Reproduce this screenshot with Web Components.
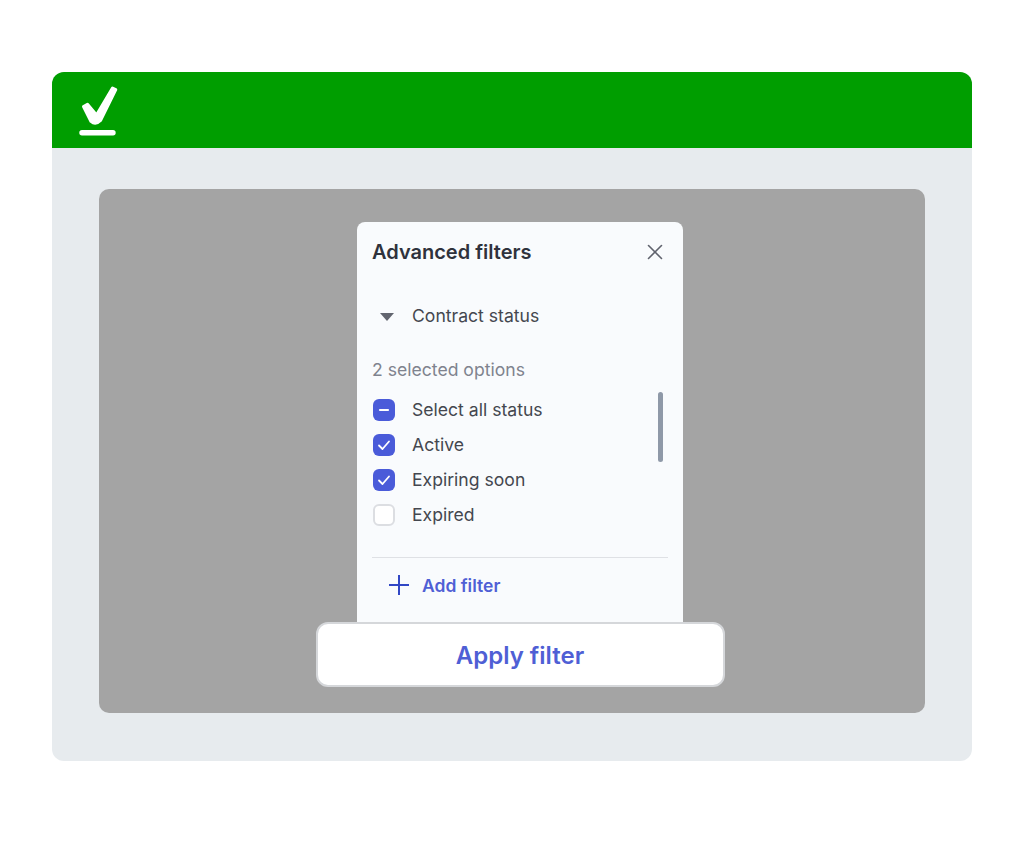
<!DOCTYPE html>
<html>
<head>
<meta charset="utf-8">
<title>Advanced filters</title>
<style>
html, body { margin: 0; background: #fff; }
body { font-family: "Inter", "Liberation Sans", sans-serif; }
</style>
</head>
<body>
<app-window>
	<filter-panel>
		<filter-check state="mixed">Select all status</filter-check>
		<filter-check state="on">Active</filter-check>
		<filter-check state="on">Expiring soon</filter-check>
		<filter-check>Expired</filter-check>
	</filter-panel>
	<apply-button>Apply filter</apply-button>
</app-window>

<script>
// WebComponents for the filter screen

const app_window_template = document.createElement('template');
app_window_template.innerHTML = `
<style>
:host { display: block; padding: 72px 52px 93px; }
#frame { background: #e7ebee; border-radius: 12px; overflow: hidden; height: 689px; }
header { background: #009e00; height: 76px; padding: 12px 0 0 27px; box-sizing: border-box; }
svg { display: block; }
#content { padding: 41px 47px 0; }
#overlay { background: #a4a4a4; border-radius: 10px; height: 524px; padding: 33px 0 0 16px; box-sizing: border-box;
	display: flex; flex-direction: column; align-items: center; }
</style>
<div id="frame">
	<header>
		<svg width="40" height="53" viewBox="0 0 40 53" fill="#fff" stroke="#fff" stroke-linecap="round" stroke-linejoin="round">
			<path d="M4.5 22.5 L8.5 20.3 L17.5 31 L33.5 4 L36.8 5.5 L21.5 36.5 Q16.5 41.5 12 37.5 Z" stroke-width="3"/>
			<path d="M3 48.7 H34" fill="none" stroke-width="5.4"/>
		</svg>
	</header>
	<div id="content">
		<div id="overlay"><slot></slot></div>
	</div>
</div>
`;

class AppWindow extends HTMLElement {
	constructor() {
		super();
		this.attachShadow({mode: 'open'}).appendChild(app_window_template.content.cloneNode(true));
	}
}

const filter_panel_template = document.createElement('template');
filter_panel_template.innerHTML = `
<style>
:host { display: block; width: 326px; height: 401px; box-sizing: border-box; background: #f9fbfd;
	border-radius: 8px 8px 0 0; padding: 0 15px; position: relative; color: #44474f; font-size: 17.6px; }
#title { display: flex; justify-content: space-between; align-items: center; height: 60px; }
h2 { margin: 0; font-size: 20px; line-height: 24px; font-weight: 600; color: #2f323c; }
#close { margin-right: 4px; display: block; }
#group { display: flex; align-items: center; height: 24px; margin-top: 23px; padding-left: 8px; gap: 18px; }
#group span { line-height: 24px; align-self: flex-start; margin-top: -1px; }
#count { color: #7f838e; height: 24px; line-height: 24px; margin-top: 29px; }
#list { display: flex; flex-direction: column; margin-top: 10px; height: 140px; }
#bar { position: absolute; left: 301px; top: 170px; width: 5px; height: 70px; background: #8f99a8; border-radius: 3px; }
hr { border: 0; border-top: 1px solid #dfe1e5; margin: 25px 0 0; }
#add { display: flex; align-items: center; gap: 12px; margin: 15px 0 0 16px; height: 24px;
	color: #4f5fd5; font-weight: 600; font-size: 17.5px; }
</style>
<div id="title">
	<h2>Advanced filters</h2>
	<svg id="close" width="18" height="18" viewBox="0 0 18 18" fill="none" stroke="#60636e" stroke-width="1.6" stroke-linecap="round">
		<path d="M2.5 2.5 L15.5 15.5 M15.5 2.5 L2.5 15.5"/>
	</svg>
</div>
<div id="group">
	<svg width="14" height="8" viewBox="0 0 14 8"><path d="M0 0 H14 L7 8 Z" fill="#62656f"/></svg>
	<span>Contract status</span>
</div>
<div id="count">2 selected options</div>
<div id="list"><slot></slot></div>
<div id="bar"></div>
<hr>
<div id="add">
	<svg width="22" height="22" viewBox="0 0 22 22" fill="none" stroke="#3147c5" stroke-width="2"><path d="M11 1 V21 M1 11 H21"/></svg>
	<span>Add filter</span>
</div>
`;

class FilterPanel extends HTMLElement {
	constructor() {
		super();
		this.attachShadow({mode: 'open'}).appendChild(filter_panel_template.content.cloneNode(true));
	}
}

const filter_check_template = document.createElement('template');
filter_check_template.innerHTML = `
<style>
:host { display: flex; align-items: center; height: 35px; gap: 17px; flex: none; }
#box { width: 22px; height: 22px; box-sizing: border-box; border-radius: 6px; margin-left: 1px;
	background: #fff; border: 2px solid #dcdee2; flex: none; }
:host([state]) #box { background: #4a5bd9; border: 0; }
svg { display: none; }
:host([state="on"]) #on, :host([state="mixed"]) #mixed { display: block; }
</style>
<div id="box">
	<svg id="on" width="22" height="22" viewBox="0 0 22 22" fill="none" stroke="#fff" stroke-width="1.8" stroke-linecap="round" stroke-linejoin="round"><path d="M6 11.5 L9.5 15 L16 7.5"/></svg>
	<svg id="mixed" width="22" height="22" viewBox="0 0 22 22" fill="none" stroke="#fff" stroke-width="2.2" stroke-linecap="round"><path d="M7 11 H15"/></svg>
</div>
<span><slot></slot></span>
`;

class FilterCheck extends HTMLElement {
	constructor() {
		super();
		this.attachShadow({mode: 'open'}).appendChild(filter_check_template.content.cloneNode(true));
	}
}

const apply_button_template = document.createElement('template');
apply_button_template.innerHTML = `
<style>
:host { display: flex; width: 409px; height: 65px; box-sizing: border-box; position: relative; flex: none;
	align-items: center; justify-content: center; background: #fff; border: 2px solid #d5d7da; border-radius: 12px;
	color: #4f5fd5; font-size: 24px; font-weight: 600; margin-top: -1px; padding-top: 1px; }
</style>
<slot></slot>
`;

class ApplyButton extends HTMLElement {
	constructor() {
		super();
		this.attachShadow({mode: 'open'}).appendChild(apply_button_template.content.cloneNode(true));
	}
}

window.customElements.define('app-window', AppWindow);
window.customElements.define('filter-panel', FilterPanel);
window.customElements.define('filter-check', FilterCheck);
window.customElements.define('apply-button', ApplyButton);
</script>
</body>
</html>
